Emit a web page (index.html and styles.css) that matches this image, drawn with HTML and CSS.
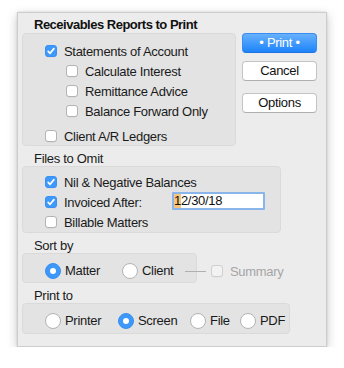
FILE: index.html
```html
<!DOCTYPE html>
<html>
<head>
<meta charset="utf-8">
<link rel="stylesheet" href="styles.css">
</head>
<body>
<div class="window">
  <div class="top">
    <div class="left">
      <div class="title">Receivables Reports to Print</div>
      <div class="group g1">
        <div class="row"><span class="cb on"><svg viewBox="0 0 12 12"><path d="M3.2 6.3 L5.1 8.3 L8.9 3.6"/></svg></span>Statements of Account</div>
        <div class="sub">
          <div class="row"><span class="cb"></span>Calculate Interest</div>
          <div class="row"><span class="cb"></span>Remittance Advice</div>
          <div class="row"><span class="cb"></span>Balance Forward Only</div>
        </div>
        <div class="row row-gap"><span class="cb"></span>Client A/R Ledgers</div>
      </div>
    </div>
    <div class="buttons">
      <div class="btn primary">• Print •</div>
      <div class="btn cancel">Cancel</div>
      <div class="btn options">Options</div>
    </div>
  </div>

  <div class="label">Files to Omit</div>
  <div class="group g2">
    <div class="row"><span class="cb on"><svg viewBox="0 0 12 12"><path d="M3.2 6.3 L5.1 8.3 L8.9 3.6"/></svg></span>Nil &amp; Negative Balances</div>
    <div class="row"><span class="cb on"><svg viewBox="0 0 12 12"><path d="M3.2 6.3 L5.1 8.3 L8.9 3.6"/></svg></span><span class="field-label">Invoiced After:</span><span class="input"><span class="hl">1</span>2/30/18</span></div>
    <div class="row"><span class="cb"></span>Billable Matters</div>
  </div>

  <div class="label">Sort by</div>
  <div class="sort-row">
    <div class="group g3">
      <div class="opt opt-matter"><span class="radio on"></span>Matter</div>
      <div class="opt"><span class="radio"></span>Client</div>
    </div>
    <div class="summary">
      <span class="connector"></span>
      <span class="cb disabled"></span>
      <span class="dim">Summary</span>
    </div>
  </div>

  <div class="label">Print to</div>
  <div class="group g4">
    <div class="opt opt-printer"><span class="radio"></span>Printer</div>
    <div class="opt opt-screen"><span class="radio on"></span>Screen</div>
    <div class="opt opt-file"><span class="radio"></span>File</div>
    <div class="opt"><span class="radio"></span>PDF</div>
  </div>
</div>
</body>
</html>
```

FILE: styles.css
```css
html, body {
  margin: 0;
  padding: 0;
  background: #ffffff;
}

body {
  font-family: "Liberation Sans", Arial, sans-serif;
  font-size: 13px;
  letter-spacing: -0.3px;
  color: #1a1a1a;
}

.window {
  margin: 12px 0 0 17px;
  width: 310px;
  height: 335px;
  box-sizing: border-box;
  background: #ececec;
  border: 1px solid #cdcdcd;
  padding: 5px 0 0 4px;
  box-shadow: 0 3px 10px rgba(0, 0, 0, 0.22), 0 0 2px rgba(0, 0, 0, 0.12);
}

.top {
  display: flex;
  align-items: flex-start;
}

.title {
  font-weight: bold;
  line-height: 14px;
  padding-left: 12px;
  letter-spacing: -0.5px;
  color: #111;
}

.group {
  box-sizing: border-box;
  background: #e3e3e3;
  border: 1px solid #dadada;
  border-radius: 4px;
}

.g1 {
  width: 214px;
  margin-top: 1px;
  padding: 8px 0 0 22px;
  height: 113px;
}

.row {
  display: flex;
  align-items: center;
  height: 18px;
  line-height: 19px;
  padding-top: 1px;
  box-sizing: border-box;
  white-space: nowrap;
}

.row .cb {
  margin-top: -1px;
}

.sub {
  padding-left: 21px;
}

.sub .row,
.g1 > .row + .sub {
  margin-top: 2px;
}

.row-gap {
  margin-top: 7px;
}

.cb {
  flex: none;
  width: 12px;
  height: 12px;
  box-sizing: border-box;
  border: 1px solid #b3b3b3;
  border-radius: 3px;
  background: #ffffff;
  margin-right: 7px;
  box-shadow: 0 0.5px 0 rgba(0, 0, 0, 0.06);
  display: flex;
}

.cb svg {
  width: 12px;
  height: 12px;
  margin: -1px;
}

.cb svg path {
  fill: none;
  stroke: #ffffff;
  stroke-width: 1.7;
  stroke-linecap: round;
  stroke-linejoin: round;
}

.cb.on {
  background: #3d9afc;
  border-color: #3a90f2;
}

.cb.disabled {
  background: #f2f2f2;
  border-color: #d0d0d0;
  margin-right: 7px;
}

.buttons {
  margin-left: 6px;
  margin-top: 15px;
  width: 75px;
  display: flex;
  flex-direction: column;
}

.btn {
  box-sizing: border-box;
  height: 20px;
  line-height: 18px;
  text-align: center;
  border-radius: 4px;
  border: 1px solid #c4c4c4;
  border-bottom-color: #b0b0b0;
  background: #ffffff;
  color: #111;
}

.btn.primary {
  background: linear-gradient(#67b1fb, #1d84fb);
  border-color: #3b8cf2;
  border-bottom-color: #1f74e0;
  color: #ffffff;
}

.btn.cancel {
  margin-top: 8px;
}

.btn.options {
  margin-top: 12px;
}

.label {
  line-height: 14px;
  margin-top: 6px;
  padding-left: 12px;
  color: #1a1a1a;
}

.g2 {
  width: 259px;
  height: 67px;
  padding: 6px 0 0 22px;
}

.g2 .row + .row {
  margin-top: 2px;
}

.field-label {
  width: 108px;
  flex: none;
}

.input {
  box-sizing: border-box;
  width: 93px;
  height: 18px;
  margin-bottom: 4px;
  background: #ffffff;
  border: 2px solid #8ab5ea;
  border-radius: 1px;
  line-height: 14px;
  padding-left: 0;
  color: #111;
  display: flex;
  align-items: stretch;
}

.hl {
  background: #f9c47a;
}

.sort-row {
  display: flex;
  align-items: flex-start;
}

.g3 {
  width: 175px;
  height: 30px;
  padding: 9px 0 0 22px;
  display: flex;
}

.opt {
  display: flex;
  align-items: center;
  height: 16px;
  line-height: 16px;
  white-space: nowrap;
}

.opt-matter {
  width: 77px;
}

.radio {
  flex: none;
  width: 16px;
  height: 16px;
  box-sizing: border-box;
  border-radius: 50%;
  border: 1px solid #b3b3b3;
  background: #ffffff;
  margin-right: 4px;
  display: flex;
  align-items: center;
  justify-content: center;
}

.radio.on {
  background: #3d98f9;
  border-color: #3890f0;
}

.radio.on::after {
  content: "";
  width: 6px;
  height: 6px;
  border-radius: 50%;
  background: #ffffff;
}

.summary {
  display: flex;
  align-items: center;
  height: 18px;
  margin-top: 9px;
  margin-left: -12px;
}

.connector {
  width: 21px;
  height: 1px;
  background: #b0b0b0;
  margin-right: 5px;
}

.dim {
  color: #a6a6a6;
}

.g4 {
  width: 268px;
  height: 31px;
  padding: 9px 0 0 22px;
  display: flex;
}

.opt-printer {
  width: 73px;
}

.opt-screen {
  width: 72px;
}

.opt-file {
  width: 50px;
}
```
